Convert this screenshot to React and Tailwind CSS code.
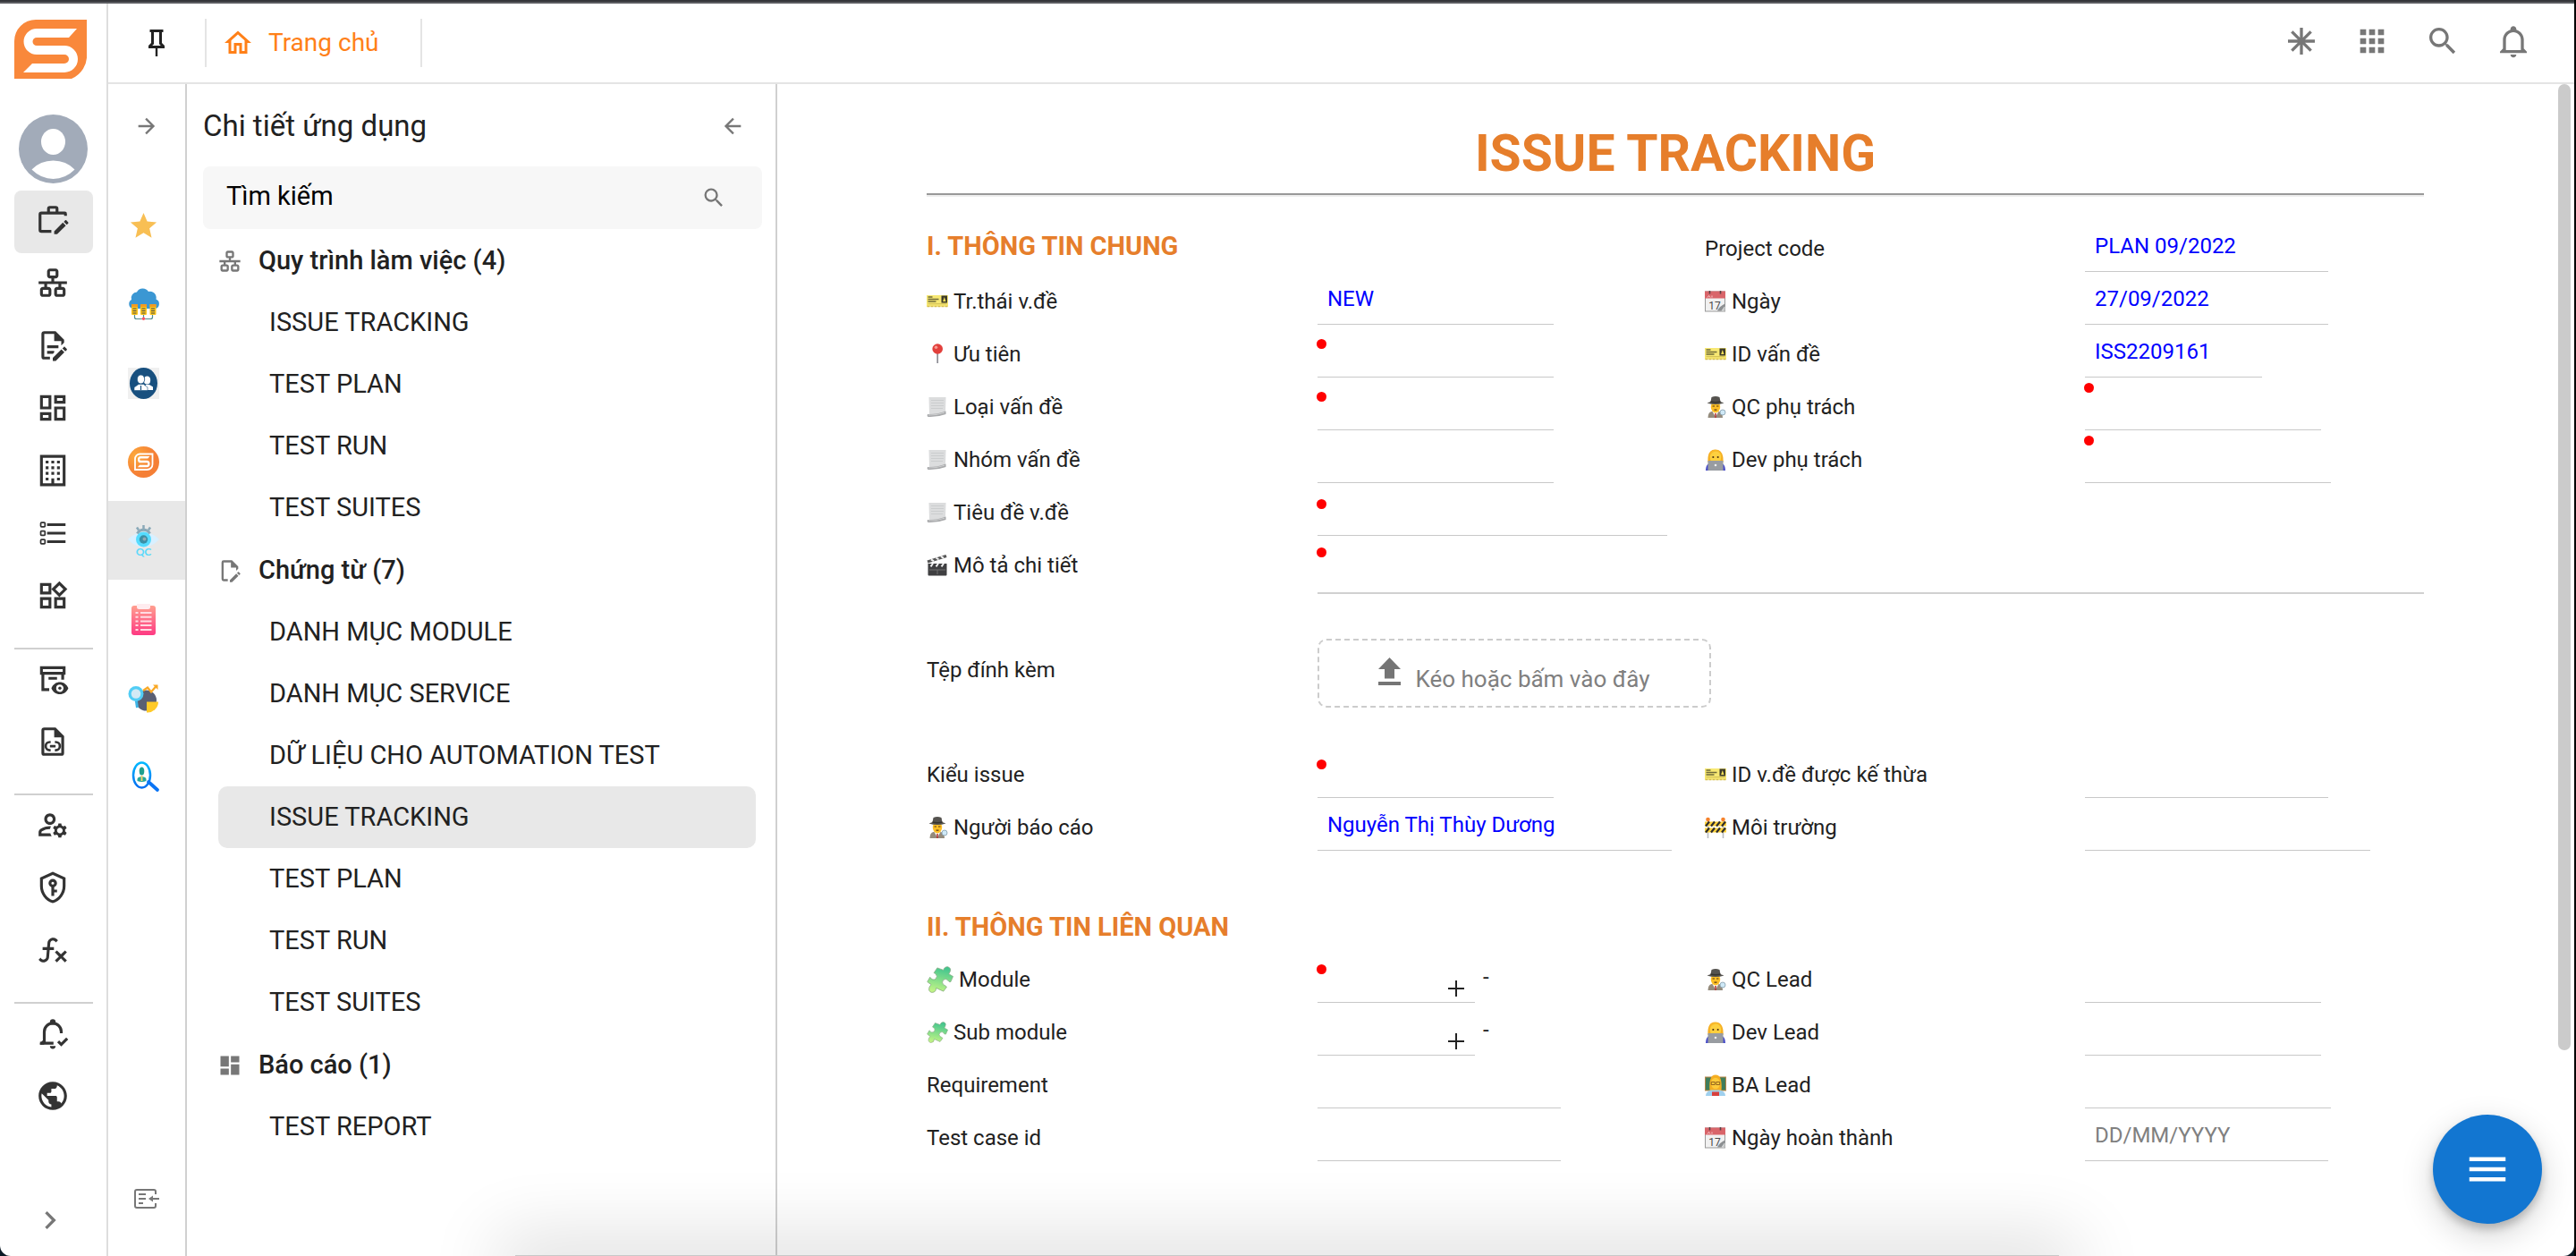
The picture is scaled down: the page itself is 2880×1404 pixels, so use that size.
import React from "react";
import { MdOutlineWidgets, MdOutlineManageAccounts, MdPublic } from "react-icons/md";

/* ---------- line icons on a 24-unit grid ---------- */

function Glyph({ d, className = "size-[38px]", children }) {
  return (
    <svg viewBox="0 0 24 24" className={className} fill="currentColor" aria-hidden="true">
      {d && <path d={d} fillRule="evenodd" />}
      {children}
    </svg>
  );
}

const P = {
  lan: "M10,2C8.89,2 8,2.89 8,4V7C8,8.11 8.89,9 10,9H11V11H2V13H6V15H5C3.89,15 3,15.89 3,17V20C3,21.11 3.89,22 5,22H9C10.11,22 11,21.11 11,20V17C11,15.89 10.11,15 9,15H8V13H16V15H15C13.89,15 13,15.89 13,17V20C13,21.11 13.89,22 15,22H19C20.11,22 21,21.11 21,20V17C21,15.89 20.11,15 19,15H18V13H22V11H13V9H14C15.11,9 16,8.11 16,7V4C16,2.89 15.11,2 14,2H10M10,4H14V7H10V4M5,17H9V20H5V17M15,17H19V20H15V17Z",
  docEdit:
    "M8,12H16V14H8V12M10,20H6V4H13V9H18V12.1L20,10.1V8L14,2H6A2,2 0 0,0 4,4V20A2,2 0 0,0 6,22H10V20M8,18H12.1L13,17.1V16H8V18M20.2,13C20.3,13 20.5,13.1 20.6,13.2L21.9,14.5C22.1,14.7 22.1,15.1 21.9,15.3L20.9,16.3L18.8,14.2L19.8,13.2C19.9,13.1 20,13 20.2,13M20.2,16.9L14.1,23H12V20.9L18.1,14.8L20.2,16.9Z",
  fileEdit:
    "M10,20H6V4H13V9H18V12.1L20,10.1V8L14,2H6A2,2 0 0,0 4,4V20A2,2 0 0,0 6,22H10V20M20.2,13C20.3,13 20.5,13.1 20.6,13.2L21.9,14.5C22.1,14.7 22.1,15.1 21.9,15.3L20.9,16.3L18.8,14.2L19.8,13.2C19.9,13.1 20,13 20.2,13M20.2,16.9L14.1,23H12V20.9L18.1,14.8L20.2,16.9Z",
  pencil:
    "M20.2,13C20.3,13 20.5,13.1 20.6,13.2L21.9,14.5C22.1,14.7 22.1,15.1 21.9,15.3L20.9,16.3L18.8,14.2L19.8,13.2C19.9,13.1 20,13 20.2,13M20.2,16.9L14.1,23H12V20.9L18.1,14.8L20.2,16.9Z",
  dashOutline:
    "M19,5V7H15V5H19M9,5V11H5V5H9M19,13V19H15V13H19M9,17V19H5V17H9M21,3H13V9H21V3M11,3H3V13H11V3M21,11H13V21H21V11M11,15H3V21H11V15Z",
  dash: "M13,3V9H21V3M13,21H21V11H13M3,21H11V15H3M3,13H11V3H3V13Z",
  building:
    "M19 3V21H13V17.5H11V21H5V3H19M21 1H3V23H21V1M7 5H9V7H7V5M11 5H13V7H11V5M15 5H17V7H15V5M7 9H9V11H7V9M11 9H13V11H11V9M15 9H17V11H15V9M7 13H9V15H7V13M11 13H13V15H11V13M15 13H17V15H15V13M7 17H9V19H7V17M15 17H17V19H15V17Z",
  fx: "M12.42,5.29C11.32,5.19 10.35,6 10.25,7.11L10,10H12.82V12H9.82L9.38,17.07C9.18,19.27 7.24,20.9 5.04,20.7C3.79,20.59 2.66,19.9 2,18.83L3.5,17.33C3.83,18.38 4.96,18.97 6,18.63C6.78,18.39 7.33,17.7 7.4,16.89L7.82,12H4.82V10H8L8.27,6.93C8.46,4.73 10.39,3.1 12.6,3.28C13.86,3.39 15,4.09 15.66,5.17L14.16,6.67C13.91,5.9 13.23,5.36 12.42,5.29M22,13.65L20.59,12.24L17.76,15.07L14.93,12.24L13.5,13.65L16.35,16.5L13.5,19.31L14.93,20.72L17.76,17.89L20.59,20.72L22,19.31L19.17,16.5L22,13.65Z",
  shield:
    "M21,11C21,16.55 17.16,21.74 12,23C6.84,21.74 3,16.55 3,11V5L12,1L21,5V11M12,21C15.75,20 19,15.54 19,11.22V6.3L12,3.18L5,6.3V11.22C5,15.54 8.25,20 12,21Z",
  file: "M14 2H6a2 2 0 0 0-2 2v16a2 2 0 0 0 2 2h12a2 2 0 0 0 2-2V8l-6-6M6 4h7v5h5v11H6V4Z",
  chevron: "M8.59,16.58L13.17,12L8.59,7.41L10,6L16,12L10,18L8.59,16.58Z",
  pin: "M16,12V4H17V2H7V4H8V12L6,14V16H11.2V22H12.8V16H18V14L16,12M8.8,14L10,12.8V4H14V12.8L15.2,14H8.8Z",
  home: "M12 5.69L17 10.19V18H15V12H9V18H7V10.19L12 5.69M12 3L2 12H5V20H11V14H13V20H19V12H22",
  apps: "M16,20H20V16H16M16,14H20V10H16M10,8H14V4H10M16,8H20V4H16M10,14H14V10H10M4,14H8V10H4M4,20H8V16H4M10,20H14V16H10M4,8H8V4H4V8Z",
  search:
    "M9.5,3A6.5,6.5 0 0,1 16,9.5C16,11.11 15.41,12.59 14.44,13.73L14.71,14H15.5L20.5,19L19,20.5L14,15.5V14.71L13.73,14.44C12.59,15.41 11.11,16 9.5,16A6.5,6.5 0 0,1 3,9.5A6.5,6.5 0 0,1 9.5,3M9.5,5C7,5 5,7 5,9.5C5,12 7,14 9.5,14C12,14 14,12 14,9.5C14,7 12,5 9.5,5Z",
  bell: "M10 21H14C14 22.1 13.1 23 12 23S10 22.1 10 21M21 19V20H3V19L5 17V11C5 7.9 7.03 5.17 10 4.29C10 4.19 10 4.1 10 4C10 2.9 10.9 2 12 2S14 2.9 14 4C14 4.1 14 4.19 14 4.29C16.97 5.17 19 7.9 19 11V17L21 19M17 11C17 8.24 14.76 6 12 6S7 8.24 7 11V18H17V11Z",
  left: "M20,11V13H8L13.5,18.5L12.08,19.92L4.16,12L12.08,4.08L13.5,5.5L8,11H20Z",
  right: "M4,11V13H16L10.5,18.5L11.92,19.92L19.84,12L11.92,4.08L10.5,5.5L16,11H4Z",
  menu: "M3,6H21V8H3V6M3,11H21V13H3V11M3,16H21V18H3V16Z",
  star: "M12,17.27L18.18,21L16.54,13.97L22,9.24L14.81,8.62L12,2L9.19,8.62L2,9.24L7.45,13.97L5.82,21L12,17.27Z",
};

const stroke = { fill: "none", stroke: "currentColor", strokeWidth: 2 };

const WorkEdit = () => (
  <Glyph>
    <path {...stroke} d="M11 20H4a1 1 0 0 1-1-1V8a1 1 0 0 1 1-1h16.500a.5.5 0 0 1 .5.5V9M9 6.500V4a1 1 0 0 1 1-1h4a1 1 0 0 1 1 1v2.500" />
    <path d={P.pencil} transform="translate(1 -1)" />
  </Glyph>
);
const ListIcon = () => (
  <Glyph>
    <path d="M8 5h13v2H8zM8 11h13v2H8zM8 17h13v2H8z" />
    <g fill="none" stroke="currentColor" strokeWidth="1.1">
      <rect x="3.500" y="4.500" width="3" height="3" rx=".6" />
      <rect x="3.500" y="10.500" width="3" height="3" rx=".6" />
      <rect x="3.500" y="16.500" width="3" height="3" rx=".6" />
    </g>
  </Glyph>
);
const ArchiveEye = () => (
  <Glyph>
    <path {...stroke} d="M4 4h16v4H4zM5 9v10.500h4.500M9 11.500h6M19 9v3.500" />
    <path fillRule="evenodd" d="M17 14.200c-2.800 0-5 1.800-6 4.300 1 2.500 3.200 4.300 6 4.300s5-1.800 6-4.300c-1-2.500-3.200-4.300-6-4.300Zm0 1.700a2.600 2.600 0 1 1 0 5.200 2.600 2.600 0 0 1 0-5.200Z" />
    <circle cx="17" cy="18.500" r="1.100" />
  </Glyph>
);
const FileLink = () => (
  <Glyph d={P.file}>
    <path {...stroke} strokeWidth="1.700" d="M10.500 12.300h-.6a2.900 2.900 0 0 0 0 5.800h.6M13.500 12.300h.6a2.900 2.900 0 0 1 0 5.800h-.6M10 15.200h4" />
  </Glyph>
);
const ShieldKey = () => (
  <Glyph d={P.shield}>
    <path {...stroke} d="M12 11v7M12 14.500h3" />
    <circle {...stroke} cx="12" cy="9" r="2" />
  </Glyph>
);
const BellCheck = () => (
  <Glyph>
    <path {...stroke} d="M3 19h9.500M6 19v-8a6 6 0 0 1 12 0v1M15.800 17.700l2.200 2.200 4.200-4.200" />
    <circle cx="12" cy="4" r="2" />
    <path d="M5 17l-2 2v1h3zM10 21h4a2 2 0 0 1-4 0Z" />
  </Glyph>
);
const Asterisk = () => (
  <Glyph className="size-10">
    <path {...stroke} d="M12 3v18M3 12h18M5.600 5.600l12.800 12.800M18.400 5.600L5.600 18.400" />
  </Glyph>
);
const Collapse = () => (
  <svg viewBox="0 0 28 22" className="h-[22px] w-7" fill="none" stroke="currentColor" strokeWidth="2" aria-hidden="true">
    <path d="M24 6V3a2 2 0 0 0-2-2H3a2 2 0 0 0-2 2v16a2 2 0 0 0 2 2h19a2 2 0 0 0 2-2v-3M5 6h8M5 11h8M5 16h5M19 11h9" />
    <path d="M16 11l5-3.500v7z" fill="currentColor" stroke="none" />
  </svg>
);

const S_PATH =
  "M70 10H25A14.5 14.5 0 0 0 25 39H56A5 5 0 0 1 56 49H20L10 59H56A15 15 0 0 0 56 29H25A4.5 4.5 0 0 1 25 20H61Z";

const Logo = () => (
  <svg viewBox="0 0 81 66" className="h-[66px] w-[81px]" aria-label="Logo">
    <path fill="#f9883b" d="M0 66V24A24 24 0 0 1 24 0H81V38A28 28 0 0 1 64 66Z" />
    <path fill="#fff" d={S_PATH} />
  </svg>
);

const Avatar = () => (
  <svg viewBox="0 0 77 77" className="size-[77px]" aria-hidden="true">
    <circle cx="38.500" cy="38.500" r="38.500" fill="#a2abb9" />
    <ellipse cx="38.500" cy="30.500" rx="13.500" ry="14.500" fill="#fff" />
    <path d="M14.500 61.500Q24 51.500 38.500 51.500T62.500 61.500Q52 72 38.500 72T14.500 61.500Z" fill="#fff" />
  </svg>
);

/* ---------- application badges, 35 units square ---------- */

const App35 = ({ children }) => (
  <svg viewBox="0 0 35 35" className="size-[35px] overflow-visible" aria-hidden="true">
    {children}
  </svg>
);
const StarApp = () => <Glyph d={P.star} className="size-[35px] text-[#f8bf54]" />;
const CloudApp = () => (
  <App35>
    <path fill="#3b97d3" d="M5 22a5.500 5.500 0 0 1-1-10 6.500 6.500 0 0 1 6-8.500 7.500 7.500 0 0 1 13-.5 7 7 0 0 1 8.500 8.500A5.600 5.600 0 0 1 31 22Z" />
    <path fill="none" stroke="#4f8a8f" strokeWidth="1.200" d="M7.500 29v2.500a2 2 0 0 0 2 2h16a2 2 0 0 0 2-2V29M17.500 28v5" />
    {[4, 14, 24.5].map((x) => (
      <g key={x}>
        <rect x={x} y="17" width="7" height="12" rx="1" fill="#fcc419" />
        <rect x={x} y="17" width="7" height="3" fill="#f29c1f" />
        <path d={`M${x + 1.5} 22h4M${x + 1.5} 24.5h4M${x + 1.5} 27h4`} stroke="#444c55" strokeWidth="1.200" />
      </g>
    ))}
    <circle cx="17.500" cy="33.300" r="1.700" fill="#ff5364" />
  </App35>
);
const PeopleApp = () => (
  <App35>
    <path fill="#f0f0f0" d="M0 0h35v35H0z" />
    <ellipse cx="17.500" cy="17.500" rx="15.500" ry="17.500" fill="#18507f" />
    <g fill="#fff">
      <ellipse cx="21.500" cy="14" rx="3.700" ry="4.500" />
      <path d="M20 19h4l4 2.500V25h-9Z" />
      <ellipse cx="14.500" cy="13" rx="4.200" ry="5" stroke="#18507f" strokeWidth=".8" />
      <path d="M7 25.500V22l5-3.500h5.500L22 22v3.500Z" stroke="#18507f" strokeWidth=".6" />
    </g>
    <path d="M14.500 20v5" stroke="#18507f" strokeWidth="1.200" />
  </App35>
);
const SApp = () => (
  <App35>
    <defs>
      <radialGradient id="sapp" cx=".25" cy=".3" r=".6">
        <stop offset="0" stopColor="#fca93b" />
        <stop offset="1" stopColor="#f57f36" />
      </radialGradient>
    </defs>
    <circle cx="17.500" cy="17.500" r="17.500" fill="url(#sapp)" />
    <path d="M8 26V14a5.500 5.500 0 0 1 5.500-5.500H27.500V20a6 6 0 0 1-6 6Z" fill="none" stroke="#fff" strokeWidth="1.800" />
    <path d={S_PATH} fill="#fff" transform="translate(8.600 8.600) scale(.225 .25)" />
  </App35>
);
const QcApp = () => (
  <App35>
    <path fill="#d9f0ff" d="M0 16Q8 8 17.500 8T35 16Q27 24.500 17.500 24.500T0 16Z" />
    <path fill="none" stroke="#8aa9b8" strokeWidth="3" d="M10.500 9.500a8 8 0 0 1 14 0" />
    <path stroke="#8aa9b8" strokeWidth="2.500" d="M17.500 4V0M12 5.500l-2-3M23 5.500l2-3" />
    <circle cx="17.500" cy="16" r="8.500" fill="#55dcff" />
    <circle cx="17.500" cy="16" r="4.700" fill="#3b8fa5" />
    <circle cx="18.500" cy="15.500" r="2" fill="#8ea9b5" />
    <text x="17.500" y="34" textAnchor="middle" fontSize="12" fontWeight="700" fontFamily="Lato, sans-serif" fill="#5ad9fb">
      QC
    </text>
  </App35>
);
const ClipboardApp = () => (
  <App35>
    <defs>
      <linearGradient id="clip" x1="0" y1="0" x2="0" y2="1">
        <stop offset="0" stopColor="#ff9f8f" />
        <stop offset="1" stopColor="#fe3a83" />
      </linearGradient>
    </defs>
    <rect x="4" y="2" width="27" height="33" rx="3" fill="url(#clip)" />
    <path fill="#ffecef" d="M10 0h15v3.500a2.500 2.500 0 0 1-2.500 2.500h-10A2.500 2.500 0 0 1 10 3.500Z" />
    <path d="M8.500 10h3M14 10h12.500M8.500 14.700h3M14 14.700h12.500M8.500 19.400h3M14 19.400h12.500M8.500 24.100h3M14 24.100h12.500M8.500 29h3M14 29h12.500" stroke="#ffdbe3" strokeWidth="2" />
  </App35>
);
const ChartApp = () => (
  <App35>
    <circle cx="20.500" cy="20" r="11.500" fill="#5a5f73" />
    <path d="M21 21.500h13a12 12 0 0 1-13 12Z" fill="#ffca28" />
    <path d="M17 9l5-3.500 4 5 6-7" fill="none" stroke="#f9a825" strokeWidth="2.300" />
    <path d="M28 2.500h5.500V8Z" fill="#f9a825" />
    <path d="M9 18l1.500 10" stroke="#3db4e6" strokeWidth="3" />
    <circle cx="9" cy="12.500" r="8.500" fill="#52cdf5" />
    <circle cx="9" cy="12.500" r="5.300" fill="#d3eaf5" />
  </App35>
);
const FinderApp = () => (
  <App35>
    <defs>
      <linearGradient id="finder" x1="0" y1="0" x2="0" y2="1">
        <stop offset="0" stopColor="#00b8ff" />
        <stop offset="1" stopColor="#006df0" />
      </linearGradient>
    </defs>
    <ellipse cx="15.500" cy="15.500" rx="9.500" ry="14" fill="#fff" stroke="url(#finder)" strokeWidth="2.500" />
    <path d="M23 23l10 9" stroke="#0a74f5" strokeWidth="3.800" strokeLinecap="round" />
    <ellipse cx="15.500" cy="11" rx="2.800" ry="4.500" fill="#1f9f8e" />
    <path d="M10.500 22v-2q0-2.500 5-3 5 .5 5 3v2q-5 2-10 0Z" fill="#27a79a" />
    <path d="M15.500 16v6" stroke="#fbd46d" strokeWidth="1.800" />
  </App35>
);

/* ---------- pictograms in front of field labels ---------- */

const Pic = ({ children, big }) => (
  <svg viewBox="0 0 24 24" className={big ? "size-[30px] shrink-0" : "size-6 shrink-0"} aria-hidden="true">
    {children}
  </svg>
);
const Ticket = () => (
  <Pic>
    <path fill="#f7e873" d="M0 5h24V17.500H0Z" />
    <path d="M.5 17.500h23" stroke="#d8c04e" strokeWidth="1.500" strokeDasharray="3 1" />
    <path d="M1.500 7h5M1.500 9.500h12M1.500 12h9" stroke="#6f6a3a" strokeWidth="1.400" />
    <path d="M1.500 14.700h21" stroke="#cdbb52" strokeWidth="1" />
    <path fill="#3c3a2a" d="M16.500 5.500h6.500v8h-6.500z" />
    <path fill="#f5e15a" d="M19.800 7l1.700 5h-3.400z" />
  </Pic>
);
const Pushpin = () => (
  <Pic>
    <path d="M12.200 10v12" stroke="#8d8d94" strokeWidth="1.700" />
    <circle cx="12.200" cy="6" r="5.800" fill="#e2403c" />
    <circle cx="10.500" cy="4.200" r="1.800" fill="#f79a92" />
  </Pic>
);
const Scroll = () => (
  <Pic>
    <path fill="#dcddde" d="M2.500 1h19l-.5 17L3 21z" />
    <path d="M5 4.500h14M5 7.500h14M5 10.500h14M5 13.500h13" stroke="#cbcdce" strokeWidth="1" />
    <path fill="#a8a9ab" d="M1 20q10 .5 20.500-3.500v3.500Q12 23.500 1.500 23Q0 22 1 20Z" />
    <path fill="#d0d1d2" d="M2 20.500q9 .5 18-2.700v1Q12 21.500 2 21.500Z" />
  </Pic>
);
const Clapper = () => (
  <Pic>
    <path fill="#3f3f41" d="M1.500 10h21v12.500a1 1 0 0 1-1 1h-19a1 1 0 0 1-1-1Z" />
    <path fill="#555" d="M.5 6.500L21.500 0l1 3L1.500 9.500Z" />
    <path stroke="#f2f2f2" strokeWidth="2" d="M5 5.300l3 2M10.500 3.500l3 2M16 1.900l3 2M7 10l-2.500 3.300M13 10l-2.500 3.300M19 10l-2.500 3.300" />
    <path stroke="#707070" d="M3 17h18M12 17v5" />
  </Pic>
);
const Calendar = () => (
  <Pic>
    <rect x=".5" y="1" width="22" height="22" fill="#f1f1f1" stroke="#9a9a9a" />
    <path fill="#d9656a" d="M0 .500h23v8H0z" />
    <path d="M5.500 0v3.500M17.500 0v3.500" stroke="#5c4346" strokeWidth="1.600" />
    <path d="M3 7.500l1.500-2 1.500 2M8 7.500v-2" stroke="#f6c8ca" fill="none" />
    <text x="11" y="20.500" textAnchor="middle" fontSize="12" fontFamily="Roboto, sans-serif" fill="#4b4b4b">
      17
    </text>
    <path d="M14 22.500q2-5 8.500-8V17l-4 5.500Z" fill="#8d9092" />
    <path d="M19 22.500l3.500-5v5z" fill="#c9cbcc" />
  </Pic>
);
const Detective = () => (
  <Pic>
    <path fill="#948b7c" d="M3.500 24q0-6 4-7h8.500q4 1 4 7Z" />
    <path fill="#fff" d="M8.500 17h7L12 23z" />
    <path stroke="#b02c2c" strokeWidth="1.500" d="M12 19v5" />
    <ellipse cx="12" cy="12" rx="5.200" ry="6.500" fill="#fdbf26" />
    <path stroke="#5a3b12" strokeWidth="1.200" d="M8.500 11h2.500M13 11h2.500M10.500 15.200h3" />
    <path fill="#55534f" d="M6.500 6l1-5q4.500-2 9 0l1 5 4 1.500q-9.500 3-19 0Z" />
    <path fill="#35342f" d="M6.500 5.300q5.500 1.500 11 0v1.400q-5.500 1.500-11 0Z" />
    <circle cx="20" cy="18" r="3" fill="#cfe9f7" stroke="#8ca5b3" strokeWidth=".9" />
  </Pic>
);
const Developer = () => (
  <Pic>
    <path fill="#f5ae22" d="M3.500 15Q2.500 0 12 .500T20.500 15Z" />
    <path fill="#4a4fc9" d="M1 24q0-6 3.500-8h15q3.500 2 3.500 8Z" />
    <ellipse cx="12" cy="9" rx="6.300" ry="7" fill="#fdd03f" />
    <path fill="#f9bb2b" d="M5 9.500Q7 3 13 2.500 18 4 19 9.500 18.500 1 12 1T5 9.500Z" />
    <path stroke="#5a3b12" strokeWidth="1.800" d="M8.500 9h1.700M13.800 9h1.700" />
    <path fill="#989ca1" d="M3.500 13h17v11h-17z" />
    <circle cx="12" cy="18" r="1.300" fill="#eceef0" />
  </Pic>
);
const Teacher = () => (
  <Pic>
    <path fill="#b98749" d="M0 2.500h24v16H0z" />
    <path fill="#3f7d5b" d="M1 3.500h22v14H1z" />
    <path fill="#f5ae22" d="M5.500 18Q4 .5 12 .5t6.500 17.500Z" />
    <ellipse cx="12" cy="10" rx="5" ry="6.300" fill="#fdcb3a" />
    <path d="M7.300 8.500h3.900v3H7.300zM12.800 8.500h3.900v3h-3.900z" fill="none" stroke="#8a5c1c" strokeWidth=".9" />
    <path fill="#9fd0ee" d="M1 24q0-5 6-6.500h10q6 1.500 6 6.500Z" />
    <path fill="#d8403d" d="M8 19.500h8V24H8z" />
  </Pic>
);
const Barrier = () => (
  <Pic>
    <path stroke="#b8bcc0" strokeWidth="1.600" d="M3.500 5v19M20.500 5v19" />
    <path fill="#ffd23a" d="M0 5.500h24v5H0zM0 12.500h24v5H0z" />
    <path stroke="#2e2e2e" strokeWidth="2.200" d="M1 10.500l4-5M7 10.500l4-5M13 10.500l4-5M19 10.500l4-5M1 17.500l4-5M7 17.500l4-5M13 17.500l4-5M19 17.500l4-5" />
    <circle cx="3.500" cy="3" r="2.300" fill="#f6822b" />
    <circle cx="20.500" cy="3" r="2.300" fill="#f6822b" />
  </Pic>
);
const Puzzle = ({ big }) => (
  <Pic big={big}>
    <defs>
      <linearGradient id="puz" x1=".6" y1="0" x2=".4" y2="1">
        <stop offset="0" stopColor="#3fc48f" />
        <stop offset="1" stopColor="#c3f585" />
      </linearGradient>
    </defs>
    <path
      fill="url(#puz)"
      stroke="#86a882"
      strokeWidth=".6"
      d="M9.500 1.500L15 3.500Q16 .3 19 .6Q22.500 2 20.800 5.200L19.800 7L23.600 9.200L21.500 14Q20 14.500 19.300 13Q17.500 10.500 15 12.200Q13 14.500 15 16.600Q17 17.500 18 18.500L15 22.500L8.500 19.500Q8.500 23.500 4.500 23.500Q1 22.500 2.500 18.500L4 16.500L.6 14L3 9.800Q5 13.200 8 11.500Q10.300 9 8 6.800L6.500 6Z"
    />
  </Pic>
);

/* ---------- navigation ---------- */

function RailButton({ label, active, children }) {
  return (
    <button
      type="button"
      aria-label={label}
      className={`flex h-[70px] w-[88px] items-center justify-center rounded-lg pb-1 pr-0.5 text-[#333] ${active ? "bg-[#e8e8e8]" : ""}`}
    >
      {children}
    </button>
  );
}

const RailLine = () => <hr className="mt-[21px] w-[88px] border-t-2 border-[#d0d0d0]" />;

function MainRail() {
  return (
    <nav aria-label="Chính" className="flex shrink-0 flex-col items-start border-r-2 border-[#dedede] pl-4 pr-[15px] pt-[18px]">
      <a href="#home" aria-label="Trang chủ">
        <Logo />
      </a>
      <button type="button" aria-label="Tài khoản" className="ml-[5px] mt-10 mb-2">
        <Avatar />
      </button>
      <RailButton label="Ứng dụng" active><WorkEdit /></RailButton>
      <RailButton label="Quy trình"><Glyph d={P.lan} /></RailButton>
      <RailButton label="Chứng từ"><Glyph d={P.docEdit} /></RailButton>
      <RailButton label="Báo cáo"><Glyph d={P.dashOutline} /></RailButton>
      <RailButton label="Tổ chức"><Glyph d={P.building} /></RailButton>
      <RailButton label="Danh sách"><ListIcon /></RailButton>
      <RailButton label="Tiện ích"><MdOutlineWidgets className="size-[38px]" /></RailButton>
      <RailLine />
      <RailButton label="Lưu trữ"><ArchiveEye /></RailButton>
      <RailButton label="Tệp"><FileLink /></RailButton>
      <RailLine />
      <RailButton label="Người dùng"><MdOutlineManageAccounts className="size-[38px]" /></RailButton>
      <RailButton label="Phân quyền"><ShieldKey /></RailButton>
      <RailButton label="Hàm"><Glyph d={P.fx} /></RailButton>
      <RailLine />
      <RailButton label="Thông báo"><BellCheck /></RailButton>
      <RailButton label="Ngôn ngữ"><MdPublic className="size-[38px]" /></RailButton>
      <button type="button" aria-label="Mở rộng" className="mb-5 ml-5 mt-auto text-[#777]">
        <Glyph d={P.chevron} className="size-10" />
      </button>
    </nav>
  );
}

const apps = [
  ["Yêu thích", StarApp],
  ["Máy chủ", CloudApp],
  ["Nhân sự", PeopleApp],
  ["Symper", SApp],
  ["QC", QcApp],
  ["Kế hoạch", ClipboardApp],
  ["Phân tích", ChartApp],
  ["Tuyển dụng", FinderApp],
];

function AppRail() {
  return (
    <nav aria-label="Ứng dụng" className="flex w-[88px] shrink-0 flex-col border-r-2 border-[#d0d0d0]">
      <button type="button" aria-label="Mở" className="mt-[33px] flex justify-center text-[#777]">
        <Glyph d={P.right} className="size-7" />
      </button>
      <div className="mt-[53px] flex flex-col">
        {apps.map(([name, Icon]) => (
          <button
            key={name}
            type="button"
            aria-label={name}
            className={`flex h-[88px] items-center justify-center pr-[7px] ${name === "QC" ? "bg-[#e8e8e8]" : ""}`}
          >
            <Icon />
          </button>
        ))}
      </div>
      <button type="button" aria-label="Thu gọn" className="mb-[53px] mt-auto flex justify-center text-[#777]">
        <Collapse />
      </button>
    </nav>
  );
}

const groups = [
  { title: "Quy trình làm việc (4)", icon: P.lan, items: ["ISSUE TRACKING", "TEST PLAN", "TEST RUN", "TEST SUITES"] },
  {
    title: "Chứng từ (7)",
    icon: P.fileEdit,
    active: 3,
    items: ["DANH MỤC MODULE", "DANH MỤC SERVICE", "DỮ LIỆU CHO AUTOMATION TEST", "ISSUE TRACKING", "TEST PLAN", "TEST RUN", "TEST SUITES"],
  },
  { title: "Báo cáo (1)", icon: P.dash, items: ["TEST REPORT"] },
];

function DetailPanel() {
  return (
    <aside className="flex w-[660px] shrink-0 flex-col border-r-2 border-[#d0d0d0] pl-[18px] pr-[15px] text-[#212121]">
      <div className="mt-6 flex h-[46px] items-center justify-between pr-[19px]">
        <h2 className="text-[33px] leading-[46px]">Chi tiết ứng dụng</h2>
        <button type="button" aria-label="Quay lại" className="text-[#777]">
          <Glyph d={P.left} className="size-7" />
        </button>
      </div>
      <div className="mt-[22px] flex h-[70px] items-center rounded-lg bg-[#f7f7f7] pb-1 pl-[26px] pr-10">
        <input
          type="search"
          aria-label="Tìm kiếm"
          placeholder="Tìm kiếm"
          className="min-w-0 flex-1 bg-transparent text-[29px] leading-9 text-black outline-none placeholder:text-black"
        />
        <Glyph d={P.search} className="mt-1 size-7 text-[#777]" />
      </div>
      {groups.map((g) => (
        <section key={g.title} className="mt-px">
          <h3 className="flex h-[69px] items-center gap-[18px] pl-4 text-[29px] font-medium">
            <Glyph d={g.icon} className="size-7 text-[#777]" />
            {g.title}
          </h3>
          <ul className="pl-[17px] pr-[7px]">
            {g.items.map((item, i) => (
              <li key={item}>
                <a
                  href="#item"
                  className={`flex h-[69px] items-center rounded-[10px] pl-[57px] text-[29px] ${g.active === i ? "bg-[#e8e8e8]" : ""}`}
                >
                  {item}
                </a>
              </li>
            ))}
          </ul>
        </section>
      ))}
    </aside>
  );
}

function TopBar() {
  return (
    <header className="flex h-[90px] items-center justify-between border-b-2 border-[#e4e4e4] pl-9 pr-12">
      <div className="flex items-center">
        <button type="button" aria-label="Ghim" className="text-[#222]">
          <Glyph d={P.pin} className="size-9" />
        </button>
        <a href="#home" className="ml-9 flex h-[54px] items-center gap-4 border-x-2 border-[#e4e4e4] pl-[17px] pr-[46px] text-[28px] text-[#ff8018]">
          <Glyph d={P.home} className="size-9" />
          Trang chủ
        </a>
      </div>
      <div className="flex items-center gap-[39px] pb-1 text-[#777]">
        <button type="button" aria-label="Trợ lý"><Asterisk /></button>
        <button type="button" aria-label="Ứng dụng"><Glyph d={P.apps} className="size-10" /></button>
        <button type="button" aria-label="Tìm kiếm"><Glyph d={P.search} className="size-10" /></button>
        <button type="button" aria-label="Thông báo"><Glyph d={P.bell} className="size-10" /></button>
      </div>
    </header>
  );
}

/* ---------- form ---------- */

const rowGrid = "grid grid-cols-[437fr_433fr_425fr_379fr]";

function Label({ id, icon, text }) {
  return (
    <label htmlFor={id} className="flex items-center gap-1.5 pt-1.5">
      {icon}
      {text}
    </label>
  );
}

function Field({ id, value, placeholder, width, dot, add }) {
  return (
    <div className="flex">
      <div className={`relative flex h-full border-b border-[#c8c8c8] ${width}`}>
        {dot && <span className={`absolute -left-px size-[11px] rounded-full bg-[red] ${dot}`} />}
        <input
          id={id}
          type="text"
          defaultValue={value}
          placeholder={placeholder}
          className="w-full min-w-0 bg-transparent pl-[11px] pt-0.5 text-[blue] outline-none placeholder:text-[#808080]"
        />
        {add && (
          <button type="button" aria-label="Thêm" className="mr-3 mt-7 size-[18px] shrink-0 self-center">
            <svg viewBox="0 0 18 18" className="size-[18px]" stroke="#222" strokeWidth="2" aria-hidden="true">
              <path d="M9 0v18M0 9h18" />
            </svg>
          </button>
        )}
      </div>
      {add && <span className="pl-[9px] pt-3.5">-</span>}
    </div>
  );
}

const w264 = "w-[264px]";
const w272 = "w-[272px]";

const general = [
  [
    null,
    { id: "project", text: "Project code", value: "PLAN 09/2022", width: w272 },
  ],
  [
    { id: "status", icon: <Ticket />, text: "Tr.thái v.đề", value: "NEW", width: w264 },
    { id: "date", icon: <Calendar />, text: "Ngày", value: "27/09/2022", width: w272 },
  ],
  [
    { id: "priority", icon: <Pushpin />, text: "Ưu tiên", width: w264, dot: "top-4" },
    { id: "issue", icon: <Ticket />, text: "ID vấn đề", value: "ISS2209161", width: "w-[198px]" },
  ],
  [
    { id: "kind", icon: <Scroll />, text: "Loại vấn đề", width: w264, dot: "top-4" },
    { id: "qc", icon: <Detective />, text: "QC phụ trách", width: w264, dot: "top-1.5" },
  ],
  [
    { id: "group", icon: <Scroll />, text: "Nhóm vấn đề", width: w264 },
    { id: "dev", icon: <Developer />, text: "Dev phụ trách", width: "w-[275px]", dot: "top-1.5" },
  ],
  [{ id: "title", icon: <Scroll />, text: "Tiêu đề v.đề", width: "w-[391px]", dot: "top-[18px]" }],
];

const reporter = [
  [
    { id: "type", text: "Kiểu issue", width: w264, dot: "top-4" },
    { id: "parent", icon: <Ticket />, text: "ID v.đề được kế thừa", width: w272 },
  ],
  [
    { id: "reporter", icon: <Detective />, text: "Người báo cáo", value: "Nguyễn Thị Thùy Dương", width: "w-[396px]" },
    { id: "env", icon: <Barrier />, text: "Môi trường", width: "w-[319px]" },
  ],
];

const related = [
  [
    { id: "module", icon: <Puzzle big />, text: "Module", width: "w-44", dot: "top-4", add: true },
    { id: "qclead", icon: <Detective />, text: "QC Lead", width: w264 },
  ],
  [
    { id: "submodule", icon: <Puzzle />, text: "Sub module", width: "w-44", add: true },
    { id: "devlead", icon: <Developer />, text: "Dev Lead", width: w264 },
  ],
  [
    { id: "requirement", text: "Requirement", width: w272 },
    { id: "balead", icon: <Teacher />, text: "BA Lead", width: "w-[275px]" },
  ],
  [
    { id: "testcase", text: "Test case id", width: w272 },
    { id: "done", icon: <Calendar />, text: "Ngày hoàn thành", placeholder: "DD/MM/YYYY", width: w272 },
  ],
];

function Rows({ rows, heading }) {
  return rows.map((row, r) => (
    <div key={r} className={`${rowGrid} h-[59px]`}>
      {row.map((f, i) =>
        f ? (
          <React.Fragment key={f.id}>
            <Label {...f} />
            <Field {...f} />
          </React.Fragment>
        ) : (
          <h2 key={i} className="col-span-2 self-center text-[29px] font-bold text-[#e67e2b]">
            {heading}
          </h2>
        ),
      )}
    </div>
  ));
}

function IssueForm() {
  return (
    <form className="ml-[167px] mr-[150px] pt-[46px] text-2xl leading-8 text-[#212121]">
      <h1 className="text-center text-[57px] font-bold leading-[64px] text-[#e67e2b]">ISSUE TRACKING</h1>
      <hr className="mb-[25px] mt-3 h-1 border-t-2 border-b-2 border-t-[#999] border-b-[#eee]" />
      <Rows rows={general} heading="I. THÔNG TIN CHUNG" />
      <div className="grid grid-cols-[437fr_1237fr]">
        <label htmlFor="description" className="flex items-center gap-1.5">
          <Clapper />
          Mô tả chi tiết
        </label>
        <div className="relative border-b-2 border-[#d0d0d0]">
          <span className="absolute -left-px top-[13px] size-[11px] rounded-full bg-[red]" />
          <textarea id="description" rows={1} className="block h-[63px] w-full resize-none overflow-hidden pl-[11px] pt-4 text-[blue] outline-none" />
        </div>
      </div>
      <div className="mt-[50px] grid grid-cols-[437fr_1237fr]">
        <label htmlFor="files" className="flex items-center pb-2">
          Tệp đính kèm
        </label>
        <label
          htmlFor="files"
          className="flex h-[77px] w-[440px] items-center justify-center rounded-[10px] border-2 border-dashed border-[#ccc] text-[26px] text-[#808080]"
        >
          <svg viewBox="0 0 25 31" className="mb-1 mr-4 h-[31px] w-[25px]" fill="#757575" aria-hidden="true">
            <path d="M12.500 0L25 13h-7v10.500H7V13H0ZM0 27h25v4H0z" />
          </svg>
          <span className="pt-3">Kéo hoặc bấm vào đây</span>
          <input id="files" type="file" className="sr-only" />
        </label>
      </div>
      <div className="mt-[42px]">
        <Rows rows={reporter} />
      </div>
      <h2 className="mb-2.5 mt-[69px] text-[29px] font-bold leading-8 text-[#e67e2b]">II. THÔNG TIN LIÊN QUAN</h2>
      <Rows rows={related} />
    </form>
  );
}

export default function App() {
  return (
    <div className="relative flex h-screen flex-col overflow-hidden border-r-2 border-black bg-[#0b1a26] font-['Roboto',sans-serif]">
      <div className="h-1 shrink-0 border-b-2 border-[#5b5c60] bg-[#35363a]" />
      <div className="flex min-h-0 flex-1 overflow-hidden rounded-b-xl bg-white">
        <MainRail />
        <div className="flex min-w-0 flex-1 flex-col">
          <TopBar />
          <div className="flex min-h-0 flex-1">
            <AppRail />
            <DetailPanel />
            <main className="min-w-0 flex-1 overflow-hidden">
              <IssueForm />
            </main>
            <div className="w-[18px] shrink-0">
              <div className="h-[1080px] w-3.5 rounded-full bg-[#cbcbcb]" />
            </div>
          </div>
        </div>
      </div>
      <div className="pointer-events-none absolute -bottom-5 left-[20%] right-[20%] h-[21px] bg-[#c8c8c8] shadow-[0_0_80px_20px_rgba(0,0,0,0.14)]" />
      <button
        type="button"
        aria-label="Menu"
        className="absolute bottom-9 right-9 flex size-[122px] items-center justify-center rounded-full bg-[#1276d1] text-white shadow-[0_6px_10px_rgba(0,0,0,0.2),0_12px_36px_rgba(0,0,0,0.18)]"
      >
        <Glyph d={P.menu} className="size-[54px]" />
      </button>
    </div>
  );
}
